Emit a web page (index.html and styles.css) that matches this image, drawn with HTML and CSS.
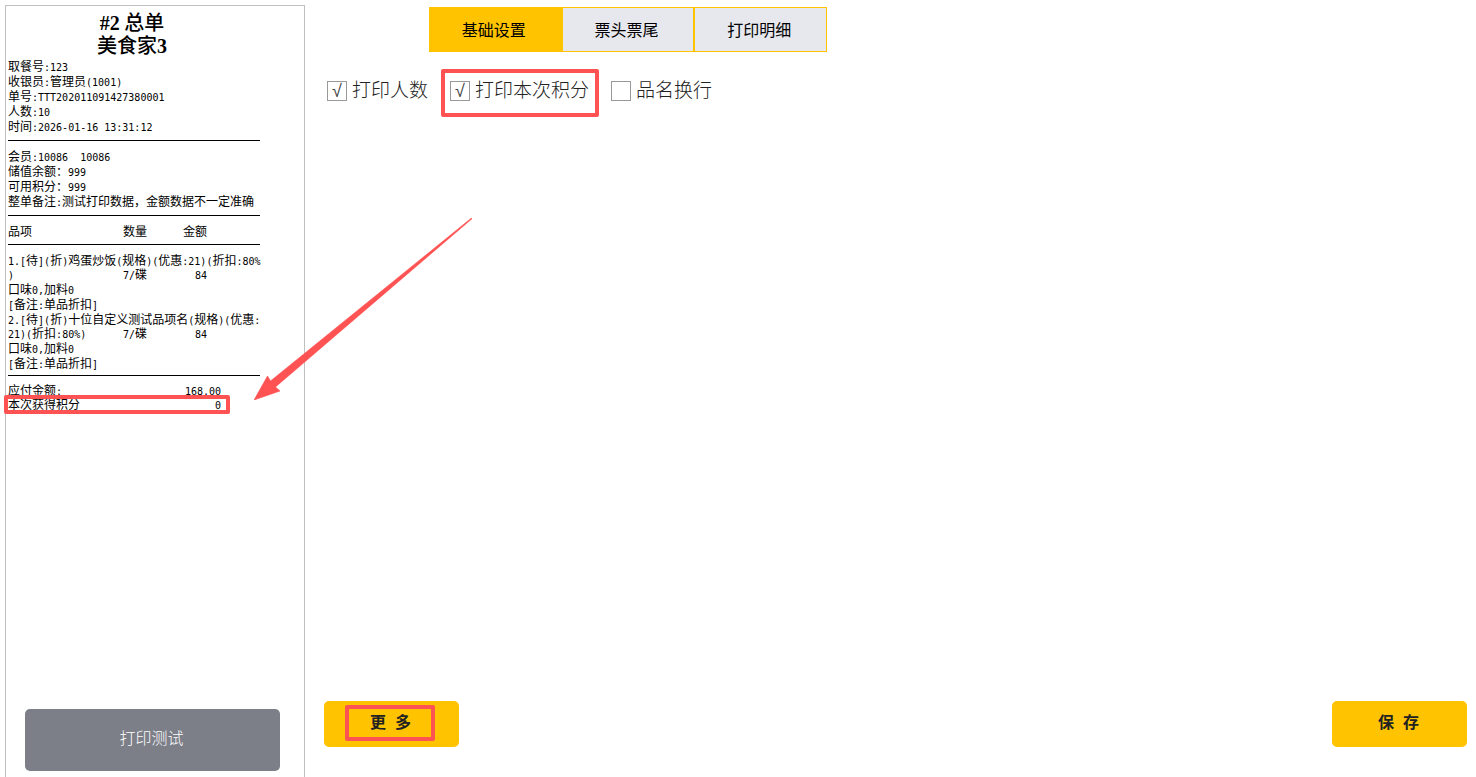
FILE: index.html
```html
<!DOCTYPE html>
<html lang="zh">
<head>
    <meta charset="UTF-8">
    <meta name="viewport" content="width=device-width, initial-scale=1.0">
    <title>打印设置</title>
    <link rel="stylesheet" href="styles.css">
</head>
<body>
    <aside class="preview">
        <div class="receipt">
            <h1><span>#2</span> 总单<br>美食家<span>3</span></h1>
            <div class="section">
                <div class="line">取餐号<span>:123</span></div>
                <div class="line">收银员<span>:</span>管理员<span>(1001)</span></div>
                <div class="line">单号<span>:TTT202011091427380001</span></div>
                <div class="line">人数<span>:10</span></div>
                <div class="line">时间<span>:2026-01-16 13:31:12</span></div>
            </div>
            <div class="section">
                <div class="line">会员<span>:10086&nbsp;&nbsp;10086</span></div>
                <div class="line">储值余额：<span>999</span></div>
                <div class="line">可用积分：<span>999</span></div>
                <div class="line">整单备注<span>:</span>测试打印数据，金额数据不一定准确</div>
            </div>
            <table class="items">
                <thead>
                    <tr><th class="name">品项</th><th class="count">数量</th><th class="amount">金额</th></tr>
                </thead>
                <tbody>
                    <tr><td colspan="3"><span>1.[</span>待<span>](</span>折<span>)</span>鸡蛋炒饭<span>(</span>规格<span>)(</span>优惠<span>:21)(</span>折扣<span>:80%</span></td></tr>
                    <tr class="tight"><td><span>)</span></td><td><span>7/</span>碟</td><td class="amount"><span>84</span></td></tr>
                    <tr><td colspan="3">口味<span>0,</span>加料<span>0</span></td></tr>
                    <tr><td colspan="3"><span>[</span>备注<span>:</span>单品折扣<span>]</span></td></tr>
                    <tr><td colspan="3"><span>2.[</span>待<span>](</span>折<span>)</span>十位自定义测试品项名<span>(</span>规格<span>)(</span>优惠<span>:</span></td></tr>
                    <tr class="tight"><td><span>21)(</span>折扣<span>:80%)</span></td><td><span>7/</span>碟</td><td class="amount"><span>84</span></td></tr>
                    <tr><td colspan="3">口味<span>0,</span>加料<span>0</span></td></tr>
                    <tr><td colspan="3"><span>[</span>备注<span>:</span>单品折扣<span>]</span></td></tr>
                </tbody>
            </table>
            <div class="totals">
                <div class="total"><div>应付金额<span>:</span></div><span class="value">168.00</span></div>
                <div class="total marked mark-points"><div>本次获得积分</div><span class="value">0</span></div>
            </div>
        </div>
        <button type="button" class="test-button">打印测试</button>
    </aside>

    <main class="settings">
        <nav class="tabs">
            <button type="button" class="tab active">基础设置</button>
            <button type="button" class="tab">票头票尾</button>
            <button type="button" class="tab">打印明细</button>
        </nav>
        <div class="options">
            <label class="option"><input type="checkbox" checked>打印人数</label>
            <label class="option marked mark-option"><input type="checkbox" checked>打印本次积分</label>
            <label class="option"><input type="checkbox">品名换行</label>
        </div>
        <footer class="actions">
            <button type="button" class="action"><span class="marked mark-more">更&nbsp;&nbsp;多</span></button>
            <button type="button" class="action">保&nbsp;&nbsp;存</button>
        </footer>
    </main>

    <svg class="arrow" width="218" height="182" viewBox="0 0 218 182" aria-hidden="true">
        <path d="M0 182L13.5 158L16.5 163L217.5 0L218 .7L21.5 169L26 173Z" fill="#ff5252" stroke="#ff5252" stroke-width=".6"/>
    </svg>
</body>
</html>
```

FILE: styles.css
```css
* {
    box-sizing: border-box;
}

body {
    margin: 0;
    min-height: 100vh;
    display: flex;
    position: relative;
    background: #fff;
    color: #000;
    font-family: "Liberation Sans", "Noto Sans CJK SC", sans-serif;
}

button {
    border: none;
    padding: 0;
    font-family: inherit;
    font-size: 16px;
    cursor: pointer;
}

/* 小票预览 */
.preview {
    flex: none;
    width: 300px;
    margin: 5px 0 0 5px;
    padding: 4px 24px 6px 2px;
    border: 1px solid #c0c0c0;
    border-bottom: none;
    display: flex;
    flex-direction: column;
    justify-content: space-between;
}

.receipt {
    width: 252px;
    font-family: "Noto Sans CJK SC", sans-serif;
    font-size: 12px;
    line-height: 15px;
    white-space: nowrap;
}

.receipt span {
    font-family: "DejaVu Sans Mono", monospace;
    font-size: 10px;
    line-height: 1;
}

.receipt h1 {
    margin: 0 0 2px;
    padding-right: 4px;
    font-size: 20px;
    line-height: 23px;
    font-weight: 500;
    text-align: center;
}

.receipt h1 span {
    font-family: "Liberation Serif", serif;
    font-size: 20px;
    font-weight: bold;
}

.line {
    height: 15px;
}

.section {
    padding-bottom: 7px;
    margin-bottom: 7px;
    border-bottom: 1px solid #000;
}

.items {
    width: 252px;
    table-layout: fixed;
    border-collapse: separate;
    border-spacing: 0;
}

.items th,
.items td {
    height: 15px;
    padding: 0;
    font-weight: normal;
    text-align: left;
    line-height: 15px;
    vertical-align: top;
}

.items thead th {
    height: 22px;
    padding-bottom: 6px;
    border-bottom: 1px solid #000;
}

.items tbody::before {
    content: "";
    display: block;
    height: 7px;
}

.items .tight td {
    height: 14px;
    line-height: 14px;
}

.items .name {
    width: 115px;
}

.items .count {
    width: 60px;
}

.items .amount {
    padding-right: 53px;
    text-align: right;
}

.totals {
    margin-top: 5px;
    padding-top: 7px;
    border-top: 1px solid #000;
    line-height: 14px;
}

.total {
    width: 213px;
    height: 14px;
    display: flex;
    justify-content: space-between;
    align-items: baseline;
}

.test-button {
    height: 62px;
    margin-left: 17px;
    padding: 0 2px 6px 0;
    border-radius: 5px;
    background: #7c7e88;
    color: #fff;
    font-weight: 300;
}

/* 设置区 */
.settings {
    flex: 1;
    min-width: 0;
    padding: 7px 9px 30px 19px;
    display: flex;
    flex-direction: column;
}

.tabs {
    display: flex;
    width: 398px;
    margin-left: 105px;
}

.tab {
    flex: 1;
    height: 45px;
    padding: 0 3px 2px 0;
    border: 1px solid #ffc300;
    background: #e7e8ee;
    color: #000;
}

.tab.active {
    background: #ffc300;
}

.options {
    display: flex;
    gap: 22px;
    margin: 25px 0 0 3px;
}

.option {
    display: flex;
    align-items: center;
    gap: 5px;
    height: 28px;
    font-size: 19px;
    line-height: 26px;
    font-weight: 300;
    color: #222;
}

.option input {
    appearance: none;
    width: 20px;
    height: 20px;
    margin: 0;
    border: 1px solid #999;
    background: #fff;
    display: flex;
    align-items: center;
    justify-content: center;
}

.option input:checked::before {
    content: "√";
    font-family: "Liberation Sans", sans-serif;
    font-size: 18px;
    font-weight: normal;
    color: #444;
}

.actions {
    margin-top: auto;
    display: flex;
    justify-content: space-between;
}

.action {
    width: 135px;
    height: 46px;
    padding: 0 2px 6px 0;
    border-radius: 5px;
    background: #ffc300;
    color: #222;
    font-weight: bold;
}

/* 红色标注 */
.marked {
    position: relative;
}

.marked::after {
    content: "";
    position: absolute;
    border: 4px solid #ff5252;
    border-radius: 2px;
    pointer-events: none;
}

.mark-points::after {
    inset: -2px -9px -3px -4px;
}

.mark-option::after {
    inset: -8px -10px -12px -9px;
}

.mark-more::after {
    inset: -9px -24px -10px -25px;
}

.arrow {
    position: absolute;
    left: 254px;
    top: 218px;
    pointer-events: none;
}
```
